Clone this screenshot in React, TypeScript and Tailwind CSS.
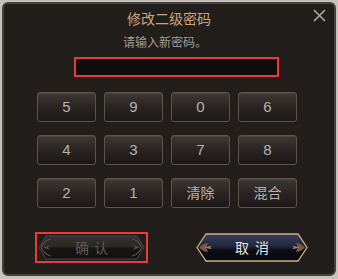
import React from "react"

const KEYS = ["5", "9", "0", "6", "4", "3", "7", "8", "2", "1", "清除", "混合"]

function KeyButton({ label }: { label: string }) {
  const isText = label.length > 1
  return (
    <button
      className={
        "h-[30px] w-[59px] rounded-[3px] border border-[#5a534e] bg-gradient-to-b from-[#3e3835] via-[#2a2523] to-[#1c1817] text-[#b9b1a9] flex items-center justify-center shadow-[inset_0_1px_0_rgba(255,255,255,0.08)] " +
        (isText ? "text-[14px]" : "text-[15px]")
      }
      style={{ fontFamily: '"Liberation Sans", "Noto Sans CJK SC", sans-serif' }}
    >
      {label}
    </button>
  )
}

function ConfirmButton() {
  return (
    <div className="relative w-[113px] h-[31px] border-2 border-[#ec3a3a] flex items-center justify-center">
      <svg className="absolute inset-0" width="109" height="27" viewBox="0 0 109 27">
        <defs>
          <linearGradient id="cf" x1="0" y1="0" x2="0" y2="1">
            <stop offset="0" stopColor="#35312e" />
            <stop offset="0.45" stopColor="#2c2826" />
            <stop offset="0.55" stopColor="#171413" />
            <stop offset="1" stopColor="#141211" />
          </linearGradient>
        </defs>
        <path d="M2 13.5 L9 2 L100 2 L107 13.5 L100 25 L9 25 Z" fill="url(#cf)" stroke="#4a4541" strokeWidth="1" />
        <path d="M4 13.5 Q8 6 14 5 M4 13.5 Q8 21 14 22" fill="none" stroke="#57524d" strokeWidth="1.2" />
        <path d="M6 13.5 L13 11 L11 13.5 L13 16 Z" fill="#514b46" />
        <path d="M105 13.5 Q101 6 95 5 M105 13.5 Q101 21 95 22" fill="none" stroke="#57524d" strokeWidth="1.2" />
        <path d="M103 13.5 L96 11 L98 13.5 L96 16 Z" fill="#514b46" />
      </svg>
      <span
        className="relative text-[14px] tracking-[5px] pl-[5px] text-[#5d5853]"
        style={{ fontFamily: '"Noto Sans CJK SC", sans-serif' }}
      >
        确认
      </span>
    </div>
  )
}

function CancelButton() {
  return (
    <div className="relative w-[112px] h-[29px] ml-[48px] flex items-center justify-center">
      <svg className="absolute inset-0" width="112" height="29" viewBox="0 0 112 29">
        <defs>
          <linearGradient id="cc" x1="0" y1="0" x2="0" y2="1">
            <stop offset="0" stopColor="#3a3f5e" />
            <stop offset="0.45" stopColor="#23273f" />
            <stop offset="0.6" stopColor="#0d0d18" />
            <stop offset="1" stopColor="#07070d" />
          </linearGradient>
        </defs>
        <path d="M1 14.5 L10 1 L102 1 L111 14.5 L102 28 L10 28 Z" fill="url(#cc)" stroke="#cdae7e" strokeWidth="1.3" />
        <path d="M3 14.5 Q8 10 12 10 L10 14.5 L12 19 Q8 19 3 14.5 Z" fill="#7a5a44" />
        <path d="M8 14.5 L16 12.8 L14 14.5 L16 16.2 Z" fill="#a98466" />
        <path d="M109 14.5 Q104 10 100 10 L102 14.5 L100 19 Q104 19 109 14.5 Z" fill="#7a5a44" />
        <path d="M104 14.5 L96 12.8 L98 14.5 L96 16.2 Z" fill="#a98466" />
      </svg>
      <span
        className="relative text-[14px] tracking-[6px] pl-[6px] text-[#e4e4e6]"
        style={{ fontFamily: '"Noto Sans CJK SC", sans-serif' }}
      >
        取消
      </span>
    </div>
  )
}

export default function App() {
  return (
    <div className="w-[338px] h-[279px] bg-[#c5c1bb] pt-[2px] pl-[2px] overflow-hidden">
      <div
        className="relative w-[334px] h-[274px] rounded-[6px] border-2 border-[#46423f] bg-[#221e1b] flex flex-col"
        style={{ fontFamily: '"Noto Sans CJK SC", sans-serif' }}
      >
        <svg className="absolute top-[5px] right-[8px]" width="13" height="13" viewBox="0 0 13 13">
          <path d="M1 1 L12 12 M12 1 L1 12" stroke="#aea69e" strokeWidth="1.6" />
        </svg>

        <div className="mt-[4px] h-[20px] leading-[20px] text-center text-[14px] text-[#c8a67b]">修改二级密码</div>
        <div className="mt-[6px] h-[16px] leading-[16px] text-center text-[12px] text-[#a39b93] pr-[8px]">请输入新密码。</div>

        <div className="mt-[7px] ml-[70px] w-[205px] h-[20px] border-2 border-[#ec3a3a] bg-[#0f0d0c]" />

        <div className="mt-[15px] ml-[33px] grid grid-cols-[repeat(4,59px)] gap-x-[8px] gap-y-[13px]">
          {KEYS.map((k) => (
            <KeyButton key={k} label={k} />
          ))}
        </div>

        <div className="mt-[24px] ml-[31px] flex items-center">
          <ConfirmButton />
          <CancelButton />
        </div>
      </div>
    </div>
  )
}
